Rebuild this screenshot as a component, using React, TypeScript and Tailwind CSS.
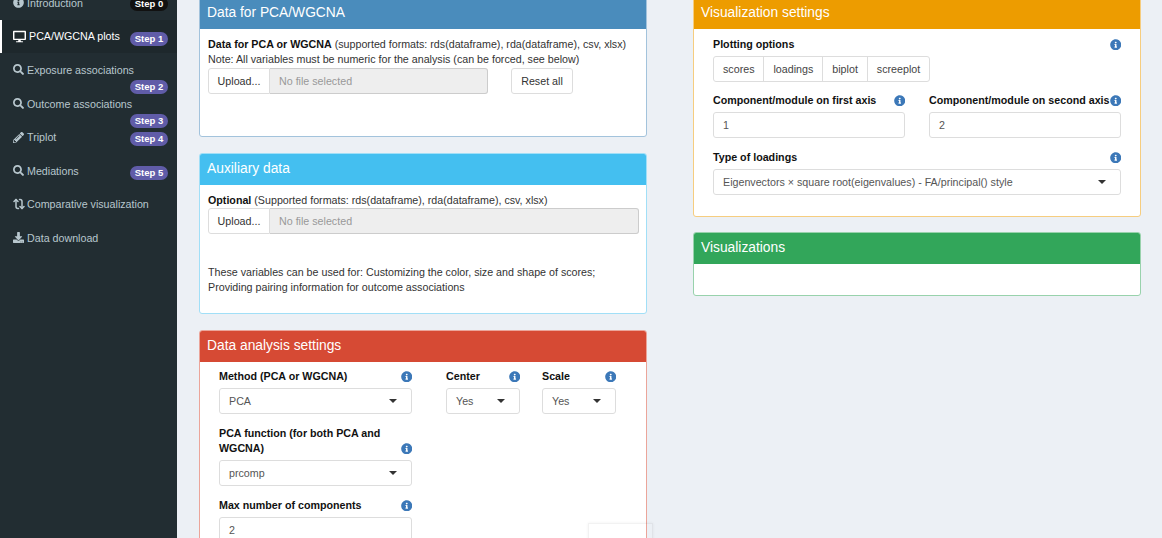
import React from "react";
import { Repeat } from "lucide-react";
import {
  FaDesktop,
  FaDownload,
  FaInfoCircle,
  FaPencilAlt,
  FaSearch,
} from "react-icons/fa";

const Info: React.FC<{ className?: string }> = ({ className }) => (
  <FaInfoCircle className={`text-[11.5px] text-[#3c78b8] shrink-0 ${className ?? ""}`} />
);

const Caret = () => (
  <span className="w-0 h-0 border-x-[4px] border-x-transparent border-t-[4px] border-t-[#333]" />
);

const navItems = [
  { label: "Introduction", icon: <FaInfoCircle className="text-[11px]" />, box: "w-[14px]" },
  { label: "PCA/WGCNA plots", icon: <FaDesktop className="text-[13px]" />, box: "w-[16px]", active: true },
  { label: "Exposure associations", icon: <FaSearch className="text-[11px]" />, box: "w-[14px]" },
  { label: "Outcome associations", icon: <FaSearch className="text-[11px]" />, box: "w-[14px]" },
  { label: "Triplot", icon: <FaPencilAlt className="text-[11px]" />, box: "w-[14px]" },
  { label: "Mediations", icon: <FaSearch className="text-[11px]" />, box: "w-[14px]" },
  {
    label: "Comparative visualization",
    icon: <Repeat className="w-[12px] h-[12px] rotate-90" strokeWidth={3} />,
    box: "w-[14px]",
  },
  { label: "Data download", icon: <FaDownload className="text-[11px]" />, box: "w-[14px]" },
];

const badges = [
  { text: "Step 0", cls: "top-[-3px] bg-[#111]" },
  { text: "Step 1", cls: "top-[32px] bg-[#605ca8]" },
  { text: "Step 2", cls: "top-[80px] bg-[#605ca8]" },
  { text: "Step 3", cls: "top-[114px] bg-[#605ca8]" },
  { text: "Step 4", cls: "top-[132px] bg-[#605ca8]" },
  { text: "Step 5", cls: "top-[166px] bg-[#605ca8]" },
];

const Sidebar = () => (
  <aside className="relative w-[177px] shrink-0 h-[538px] overflow-hidden bg-[#222d32] text-[10.7px]">
    <div className="-mt-[14px]">
      {navItems.map((item) => (
        <div
          key={item.label}
          className={`flex items-center h-[33.6px] pl-[11px] border-l-2 ${
            item.active
              ? "border-white bg-[#1e282c] text-white"
              : "border-transparent text-[#b8c7ce]"
          }`}
        >
          <span className={`flex items-center shrink-0 ${item.box}`}>{item.icon}</span>
          <span>{item.label}</span>
        </div>
      ))}
    </div>
    {badges.map((b) => (
      <span
        key={b.text}
        className={`absolute left-[130px] w-[38px] h-[14px] rounded-full text-white font-bold text-[9.5px] leading-[14px] text-center ${b.cls}`}
      >
        {b.text}
      </span>
    ))}
  </aside>
);

const Card: React.FC<{
  title: string;
  head: string;
  border: string;
  className?: string;
  children?: React.ReactNode;
}> = ({ title, head, border, className, children }) => (
  <section className={`shrink-0 rounded-[3px] border overflow-hidden bg-white ${border} ${className ?? ""}`}>
    <h3 className={`h-[31px] px-[7px] text-[13.8px] leading-[29px] text-white ${head}`}>{title}</h3>
    {children}
  </section>
);

const FileInput: React.FC<{ width: string }> = ({ width }) => (
  <div className={`flex h-[26px] ${width}`}>
    <span className="flex items-center justify-center w-[62px] border border-[#ddd] rounded-l-[3px] text-[#333]">
      Upload...
    </span>
    <span className="flex flex-1 items-center pl-[9px] border border-l-0 border-[#ccc] rounded-r-[3px] bg-[#eee] text-[#999]">
      No file selected
    </span>
  </div>
);

const Field: React.FC<{
  label: React.ReactNode;
  width: string;
  children: React.ReactNode;
}> = ({ label, width, children }) => (
  <div className={width}>
    <div className="flex items-end justify-between mb-[4px] font-bold text-[#111] leading-[15px] whitespace-nowrap">
      <span>{label}</span>
      <Info className="mb-[2px]" />
    </div>
    {children}
  </div>
);

const Select: React.FC<{ value: string }> = ({ value }) => (
  <div className="flex items-center justify-between h-[26px] pl-[9px] pr-[14px] border border-[#ddd] rounded-[3px] text-[#555]">
    <span>{value}</span>
    <Caret />
  </div>
);

const NumberBox: React.FC<{ value: string }> = ({ value }) => (
  <div className="flex items-center h-[26px] pl-[9px] border border-[#ddd] rounded-[3px] text-[#555]">
    {value}
  </div>
);

const DataCard = () => (
  <Card
    title="Data for PCA/WGCNA"
    head="bg-[#4a8cbc]"
    border="border-[#a3c3dc]"
    className="h-[140px]"
  >
    <div className="pl-[8px] pt-[8px]">
      <p className="leading-[15.3px] text-[#333]">
        <b className="text-[#111]">Data for PCA or WGCNA</b> (supported formats: rds(dataframe),
        rda(dataframe), csv, xlsx)
        <br />
        Note: All variables must be numeric for the analysis (can be forced, see below)
      </p>
      <div className="flex gap-[23px]">
        <FileInput width="w-[280px]" />
        <span className="flex items-center justify-center w-[62px] h-[26px] border border-[#ddd] rounded-[3px] text-[#333]">
          Reset all
        </span>
      </div>
    </div>
  </Card>
);

const AuxCard = () => (
  <Card
    title="Auxiliary data"
    head="bg-[#44bff0]"
    border="border-[#a1dff7]"
    className="h-[161px]"
  >
    <div className="px-[8px] pt-[8px]">
      <p className="leading-[15.3px] text-[#333]">
        <b className="text-[#111]">Optional</b> (Supported formats: rds(dataframe), rda(dataframe),
        csv, xlsx)
      </p>
      <FileInput width="w-[431px]" />
      <p className="mt-[31px] leading-[15px] text-[#333]">
        These variables can be used for: Customizing the color, size and shape of scores;
        <br />
        Providing pairing information for outcome associations
      </p>
    </div>
  </Card>
);

const AnalysisCard = () => (
  <Card
    title="Data analysis settings"
    head="bg-[#d64a34]"
    border="border-[#eba59a]"
    className="h-[300px]"
  >
    <div className="pl-[19px] pt-[7px]">
      <div className="flex gap-[34px]">
        <Field label="Method (PCA or WGCNA)" width="w-[193px]">
          <Select value="PCA" />
        </Field>
        <div className="flex gap-[22px]">
          <Field label="Center" width="w-[74px]">
            <Select value="Yes" />
          </Field>
          <Field label="Scale" width="w-[74px]">
            <Select value="Yes" />
          </Field>
        </div>
      </div>
      <div className="w-[193px] mt-[12px]">
        <Field
          label={
            <>
              PCA function (for both PCA and
              <br />
              WGCNA)
            </>
          }
          width="w-full"
        >
          <Select value="prcomp" />
        </Field>
      </div>
      <div className="w-[193px] mt-[12px]">
        <Field label="Max number of components" width="w-full">
          <NumberBox value="2" />
        </Field>
      </div>
    </div>
  </Card>
);

const PlotOptions = () => (
  <div className="flex w-fit h-[26px] border border-[#ddd] rounded-[3px] text-[#444]">
    {["scores", "loadings", "biplot", "screeplot"].map((t, i) => (
      <span
        key={t}
        className={`flex items-center px-[9px] ${i > 0 ? "border-l border-[#ddd]" : ""}`}
      >
        {t}
      </span>
    ))}
  </div>
);

const VizSettingsCard = () => (
  <Card
    title="Visualization settings"
    head="bg-[#ed9c00]"
    border="border-[#f6cd7f]"
    className="h-[220px]"
  >
    <div className="px-[19px] pt-[8px]">
      <Field label="Plotting options" width="w-full">
        <PlotOptions />
      </Field>
      <div className="flex gap-[24px] mt-[11px]">
        <Field label="Component/module on first axis" width="w-[192px]">
          <NumberBox value="1" />
        </Field>
        <Field label="Component/module on second axis" width="w-[192px]">
          <NumberBox value="2" />
        </Field>
      </div>
      <div className="mt-[12px]">
        <Field label="Type of loadings" width="w-full">
          <Select value="Eigenvectors × square root(eigenvalues) - FA/principal() style" />
        </Field>
      </div>
    </div>
  </Card>
);

export default function App() {
  return (
    <div className="flex h-[538px] w-[1162px] overflow-hidden bg-[#ecf0f5] text-[10.7px] font-['Liberation_Sans',Arial,sans-serif]">
      <Sidebar />
      <main className="relative flex-1 flex gap-[46px] pl-[22px] -mt-[3px]">
        <div className="w-[448px] shrink-0 flex flex-col gap-[16px]">
          <DataCard />
          <AuxCard />
          <AnalysisCard />
        </div>
        <div className="w-[448px] shrink-0 flex flex-col gap-[15px]">
          <VizSettingsCard />
          <Card
            title="Visualizations"
            head="bg-[#32a65a]"
            border="border-[#98d2ac]"
            className="h-[64px]"
          />
        </div>
        <div className="absolute left-[411px] top-[526px] w-[65px] h-[30px] border border-black/5 shadow-[0_0_3px_rgba(0,0,0,0.06)]" />
      </main>
    </div>
  );
}
